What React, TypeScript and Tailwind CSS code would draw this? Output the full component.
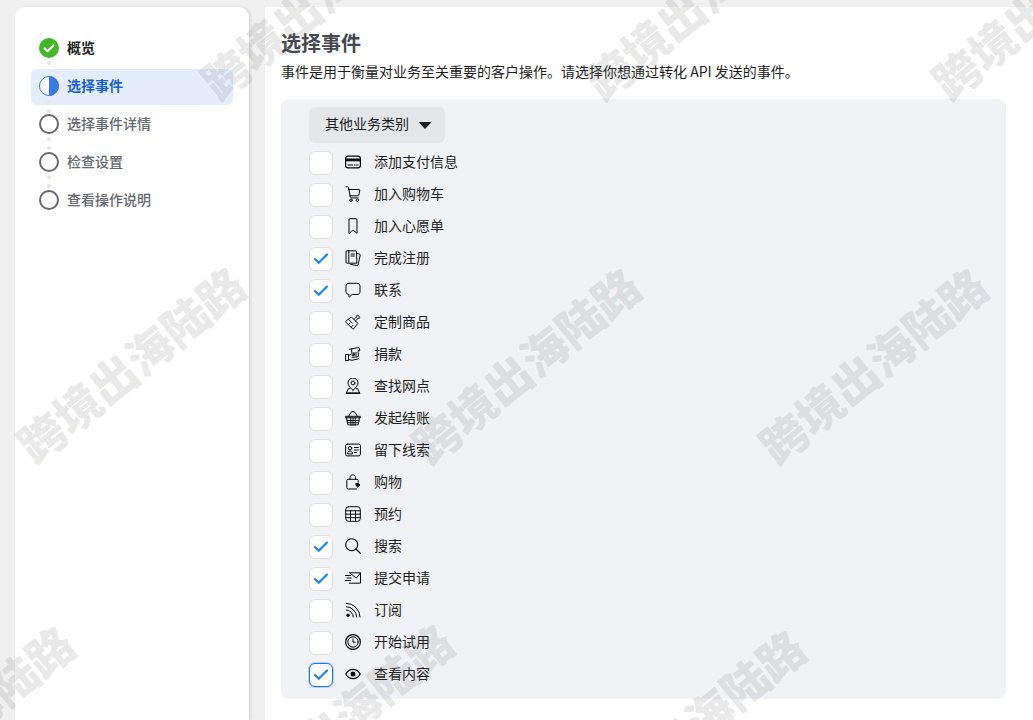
import type { ReactNode } from "react";
import { Check } from "lucide-react";

const font = "font-['Noto_Sans_CJK_SC','Liberation_Sans',sans-serif]";

function Ico({ children }: { children: ReactNode }) {
  return (
    <svg
      width="16"
      height="16"
      viewBox="0 0 16 16"
      fill="none"
      stroke="#050505"
      strokeWidth="1"
      strokeLinecap="round"
      strokeLinejoin="round"
      className="shrink-0 -translate-y-px"
    >
      {children}
    </svg>
  );
}

const events: { label: string; checked?: boolean; focus?: boolean; icon: ReactNode }[] = [
  {
    label: "添加支付信息",
    icon: (
      <>
        <rect x="0.6" y="2.2" width="14.8" height="11.6" rx="2.4" strokeWidth="1.2" />
        <path d="M0.8 5h14.400v1.800H0.800z" fill="#050505" />
        <path d="M3 11h4.500M9.500 11h.7M11.500 11h1.500" />
      </>
    ),
  },
  {
    label: "加入购物车",
    icon: (
      <>
        <path d="M1 .8h1.600c.5 0 .8.3.9.7l1.900 9.800c.1.400.4.600.8.600h7" />
        <path d="M3.600 3.500h10.600c.4 0 .7.400.6.800l-1 5c-.1.300-.4.500-.7.500H4.900" />
        <circle cx="6" cy="14.200" r="1.200" />
        <circle cx="12.400" cy="14.200" r="1.200" />
      </>
    ),
  },
  {
    label: "加入心愿单",
    icon: <path d="M4 15.300V1.700c0-.6.400-1 1-1h6c.6 0 1 .4 1 1v13.600l-3-2.500c-.6-.5-1.400-.5-2 0z" />,
  },
  {
    label: "完成注册",
    icon: (
      <>
        <path d="M11.500 2.200v-.4c0-.6-.4-1-1-1H2c-.6 0-1 .4-1 1v10.400c0 .6.400 1 1 1h9.500z" />
        <path d="M3.800 .8v11.400M6 4h3.400M6 6h3.400" />
        <path d="M11.500 3.400l3 .7c.5.100.8.600.7 1.100l-2.200 9.800c-.1.500-.6.800-1.100.7l-6.400-1.500" />
      </>
    ),
  },
  {
    label: "联系",
    icon: <path d="M4 1.300h8c1.800 0 3 1.200 3 3v5.200c0 1.800-1.200 3-3 3H7.200l-2.700 2.400c-.3.200-.6 0-.6-.3v-2.300C2 12.300 1 11.200 1 9.500V4.300c0-1.800 1.200-3 3-3z" />,
  },
  {
    label: "定制商品",
    icon: (
      <>
        <path d="M6.800 3.300l6 6-4 5.400c-.3.400-.8.400-1.100.100L.8 8c-.3-.300-.3-.800.100-1.100z" />
        <path d="M9 5.500l2.600-2.600.2-1.300c.1-.500.700-.700 1.100-.400l1.800 1.800c.300.400.100 1-.400 1.100l-1.300.200-2.600 2.600" />
        <path d="M3.800 5.600l3.400 3.400M3.500 10.500l1.500-1.500M6.500 13l1.300-1.500" />
      </>
    ),
  },
  {
    label: "捐款",
    icon: (
      <>
        <path d="M4.500 3.200l9.500-1.700.9 3-1.900.300.500 5.700-6.500 1" />
        <path d="M6.700 3v3.500" />
        <path d="M8 7h3.500M8.500 9h3" />
        <path d="M1 8.500h2.500v6H1z" />
        <path d="M3.500 9.500l3-1.500h2.500c.5 0 .7.800 0 1.100l-1.800.6M3.500 13.500l3.500.8 6.500-1.500" />
      </>
    ),
  },
  {
    label: "查找网点",
    icon: (
      <>
        <path d="M8 12.300c-2.800-2.600-5-4.900-5-7.300A5 5 0 0 1 13 5c0 2.400-2.200 4.700-5 7.300z" />
        <circle cx="8" cy="5" r="1.900" />
        <path d="M5 10.700H3.300l-2 4.500h13.400l-2-4.500H11" />
        <path d="M1.300 15.200h13.400" strokeWidth="1.300" />
      </>
    ),
  },
  {
    label: "发起结账",
    icon: (
      <>
        <path d="M3.600 6.300L6 2.300c.8-1 3.200-1 4 0l2.400 4" />
        <path d="M.6 6.300h14.800v1.500H.6z" />
        <path d="M1.600 7.800l1 6.300c.1.500.5.800 1 .8h8.800c.5 0 .9-.3 1-.8l1-6.300" />
        <path d="M2 10.500h12M2.400 12.700h11.200M5.800 7.800v7.100M8 7.800v7.100M10.200 7.800v7.100" strokeWidth=".9" />
      </>
    ),
  },
  {
    label: "留下线索",
    icon: (
      <>
        <rect x="0.600" y="2.100" width="14.800" height="11.800" rx="1.600" />
        <circle cx="5" cy="6.200" r="1.700" />
        <path d="M2.500 11.500c.2-1.600 1.200-2.500 2.500-2.500s2.300.9 2.500 2.500z" />
        <path d="M9.500 5.500h3.800M9.500 8h3.800M9.500 10.500h2" />
      </>
    ),
  },
  {
    label: "购物",
    icon: (
      <>
        <path d="M5 5.300V3.500C5 2 6.200.8 7.800.8s2.700 1.200 2.700 2.700v1.800" />
        <path d="M13.200 8.300V6.500c0-.700-.5-1.200-1.200-1.200H3c-.7 0-1.200.5-1.200 1.200v7.200c0 .7.500 1.300 1.200 1.300h8.500" />
        <path d="M11.200 9.500h2.300l1.500 1.500-2.200 2.200-1.600-1.500z" fill="#050505" />
      </>
    ),
  },
  {
    label: "预约",
    icon: (
      <>
        <rect x="0.700" y="0.700" width="14.600" height="14.600" rx="2.800" />
        <path d="M.7 4.800h14.600M.7 8.200h14.600M.7 11.700h14.600M5.500 4.800v10.500M10.500 4.800v10.500" />
      </>
    ),
  },
  {
    label: "搜索",
    icon: (
      <>
        <circle cx="6.700" cy="6.700" r="6" strokeWidth="1.100" />
        <path d="M11 11l4.500 4.500" strokeWidth="1.300" />
      </>
    ),
  },
  {
    label: "提交申请",
    icon: (
      <>
        <path d="M4.500 2.800h11v10.400H4.500" />
        <path d="M4.800 2.900l6 4.800c.3.200.6.200.9 0l3.700-4.800" />
        <path d="M.5 5.500h5M2 8h4.200M.5 10.500h5" />
      </>
    ),
  },
  {
    label: "订阅",
    icon: (
      <>
        <circle cx="3" cy="13.200" r="1.700" fill="#050505" stroke="none" />
        <path d="M1.300 8a7 7 0 0 1 7 7" />
        <path d="M1.300 4.700a10.300 10.300 0 0 1 10.300 10.300" />
        <path d="M1.300 1.300a13.700 13.700 0 0 1 13.700 13.700" />
      </>
    ),
  },
  {
    label: "开始试用",
    icon: (
      <>
        <circle cx="8" cy="8" r="7.400" strokeWidth="1.150" />
        <circle cx="8" cy="8" r="5.200" />
        <path d="M8 5v3.200h2.300" />
      </>
    ),
  },
  {
    label: "查看内容",
    focus: true,
    checked: true,
    icon: (
      <>
        <path d="M.8 8C2.500 5 5 3.300 8 3.300S13.500 5 15.200 8C13.500 11 11 12.700 8 12.700S2.500 11 .8 8z" strokeWidth="1.200" />
        <circle cx="8" cy="8" r="2.500" fill="#050505" stroke="none" />
      </>
    ),
  },
];

const checkedLabels = ["完成注册", "联系", "搜索", "提交申请"];

function StepRing() {
  return <div className="h-5 w-5 shrink-0 rounded-full border-[2.5px] border-[#65686f]" />;
}

const steps: { label: string; icon: ReactNode; cls: string; active?: boolean }[] = [
  {
    label: "概览",
    cls: "font-semibold text-[#1c1e21]",
    icon: (
      <svg width="20" height="20" viewBox="0 0 20 20" className="shrink-0">
        <circle cx="10" cy="10" r="10" fill="#42b72a" />
        <path d="M5.500 10.300l3 3 6-6" fill="none" stroke="#fff" strokeWidth="2" strokeLinecap="round" strokeLinejoin="round" />
      </svg>
    ),
  },
  {
    label: "选择事件",
    active: true,
    cls: "font-semibold text-[#1b5fd0]",
    icon: (
      <svg width="20" height="20" viewBox="0 0 20 20" className="shrink-0">
        <circle cx="10" cy="10" r="9.500" fill="#fff" stroke="#3a78e7" />
        <path d="M10 0a10 10 0 0 1 0 20z" fill="#3a78e7" />
      </svg>
    ),
  },
  { label: "选择事件详情", cls: "font-medium text-[#65686f]", icon: <StepRing /> },
  { label: "检查设置", cls: "font-medium text-[#65686f]", icon: <StepRing /> },
  { label: "查看操作说明", cls: "font-medium text-[#65686f]", icon: <StepRing /> },
];

const marks = [
  [314, 0],
  [698, 0],
  [1045, 0],
  [130, 363],
  [525, 364],
  [872, 364],
  [-41, 722],
  [338, 720],
  [690, 726],
];

export default function App() {
  return (
    <div className={`relative flex h-[720px] w-[1033px] gap-4 overflow-hidden bg-[#f0f0f0] pt-[7px] pl-[15px] ${font}`}>
      <aside className="w-[234px] shrink-0 rounded-t-[10px] bg-white px-4 pt-[23px] shadow-[2px_0_3px_rgba(0,0,0,0.1)]">
        <div className="flex flex-col gap-0.5">
          {steps.map((s, i) => (
            <div
              key={s.label}
              className={`relative flex h-9 items-center gap-2 rounded-md px-2 text-sm ${s.active ? "mt-px -mb-px bg-[#e4eefb] pb-0.5" : ""}`}
            >
              {s.icon}
              <span className={`-translate-y-px ${s.cls}`}>{s.label}</span>
              {i < steps.length - 1 && (
                <div className="absolute top-[31px] left-[16px] flex flex-col gap-[5px]">
                  <div className="h-1 w-1 rounded-full bg-[#e4e6eb]" />
                  <div className="h-1 w-1 rounded-full bg-[#e4e6eb]" />
                </div>
              )}
            </div>
          ))}
        </div>
      </aside>

      <main className="min-w-0 flex-1 bg-white pt-5 pr-[27px] pl-4">
        <h1 className="text-xl leading-[32px] font-semibold text-[#444950]">选择事件</h1>
        <p className="mt-[3px] mb-[19px] text-sm leading-[18px] text-[#1c1e21]">
          事件是用于衡量对业务至关重要的客户操作。请选择你想通过转化 API 发送的事件。
        </p>
        <section className="h-[600px] rounded-lg bg-[#f1f2f5] pt-2 pl-7">
          <button className="flex h-9 w-[136px] items-center rounded-md bg-[#e4e6e9] pb-0.5 pl-4 text-sm text-[#1c1e21]">
            <span className="-translate-y-px">其他业务类别</span>
            <svg width="12" height="7" viewBox="0 0 12 7" className="mt-0.5 ml-2.5">
              <path d="M.8 0h10.400c.6 0 .9.700.5 1.100L6.500 6.500c-.3.300-.7.300-1 0L.3 1.100C-.1.700.2 0 .8 0z" fill="#1c1e21" />
            </svg>
          </button>
          <ul className="mt-2 flex flex-col gap-2">
            {events.map((e) => {
              const on = e.checked || checkedLabels.includes(e.label);
              return (
                <li key={e.label} className="flex h-6 items-center text-sm text-[#1c1e21]">
                  <span
                    className={`flex h-6 w-6 items-center justify-center rounded-md border bg-white ${
                      e.focus ? "border-[#1877f2] shadow-[0_0_0_1px_rgba(24,119,242,0.25)]" : "border-[#dfe0e3]"
                    }`}
                  >
                    {on && <Check size={18} strokeWidth={3} className="text-[#2482f5]" />}
                  </span>
                  <span className="ml-3 flex w-4 items-center">
                    <Ico>{e.icon}</Ico>
                  </span>
                  <span className="ml-[13px] -translate-y-0.5">{e.label}</span>
                </li>
              );
            })}
          </ul>
        </section>
      </main>

      {marks.map(([x, y]) => (
        <div
          key={`${x}-${y}`}
          style={{ left: x, top: y }}
          className="pointer-events-none absolute -translate-x-1/2 -translate-y-1/2 -rotate-[39deg] text-[46px] leading-none font-black whitespace-nowrap text-[rgba(80,84,90,0.15)]"
        >
          跨境出海陆路
        </div>
      ))}
    </div>
  );
}
